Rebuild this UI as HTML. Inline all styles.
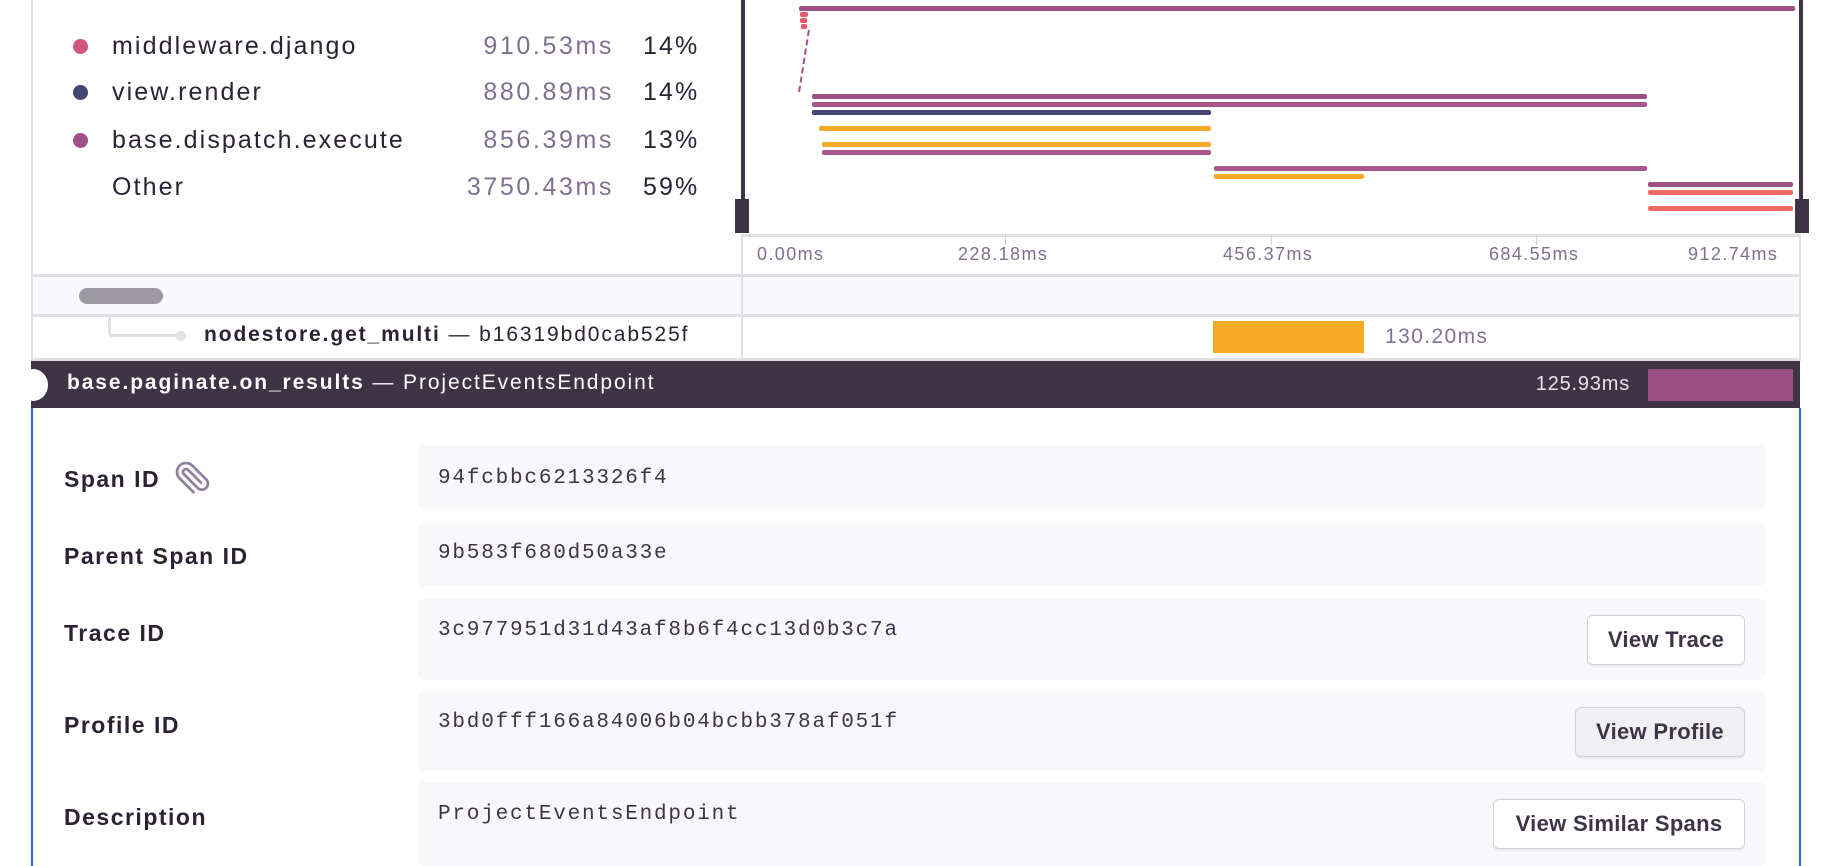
<!DOCTYPE html>
<html><head><meta charset="utf-8"><style>
*{margin:0;padding:0;box-sizing:border-box}
body{width:1838px;height:866px;overflow:hidden;background:#fff;font-family:"Liberation Sans",sans-serif;color:#2b2233;position:relative}
.a{position:absolute;white-space:nowrap}
.dot{position:absolute;width:15px;height:15px;border-radius:50%}
.lg{font-size:25px;color:#2b2233;letter-spacing:2.1px}
.ms{font-size:25px;color:#80708f;text-align:right;width:260px;letter-spacing:2.6px}
.bar{position:absolute;height:5px;border-radius:2px}
.ax{font-size:18px;color:#80708f;letter-spacing:1.4px}
.box{position:absolute;left:418px;width:1347px;background:#f8f8fa;border-radius:6px}
.lbl{position:absolute;left:64px;font-size:23px;font-weight:bold;color:#2b2233;letter-spacing:1.5px}
.val{position:absolute;left:438px;font-family:"Liberation Mono",monospace;font-size:21px;color:#3e3446;letter-spacing:1.8px}
.btn{position:absolute;border:1px solid #d4d0da;border-radius:6px;background:#fff;font-size:22px;font-weight:bold;color:#3e3446;text-align:center;box-shadow:0 2px 0 rgba(0,0,0,.05);letter-spacing:0.3px}
</style></head><body>
<div class="a" style="left:31px;top:0;width:2px;height:361px;background:#e2dee6"></div>
<div class="dot" style="left:73px;top:39px;background:#d2577b"></div>
<div class="dot" style="left:73px;top:85px;background:#444674"></div>
<div class="dot" style="left:73px;top:133px;background:#a1508a"></div>
<div class="a lg" style="left:112px;top:32px">middleware.django</div>
<div class="a lg" style="left:112px;top:78px">view.render</div>
<div class="a lg" style="left:112px;top:126px">base.dispatch.execute</div>
<div class="a lg" style="left:112px;top:173px">Other</div>
<div class="a ms" style="left:354px;top:32px">910.53ms</div>
<div class="a ms" style="left:354px;top:78px">880.89ms</div>
<div class="a ms" style="left:354px;top:126px">856.39ms</div>
<div class="a ms" style="left:354px;top:173px">3750.43ms</div>
<div class="a lg" style="left:643px;top:32px">14%</div>
<div class="a lg" style="left:643px;top:78px">14%</div>
<div class="a lg" style="left:643px;top:126px">13%</div>
<div class="a lg" style="left:643px;top:173px">59%</div>

<!-- chart -->
<div class="a" style="left:741px;top:0;width:4px;height:200px;background:#3e3446"></div>
<div class="a" style="left:1799px;top:0;width:4px;height:200px;background:#3e3446"></div>
<div class="a" style="left:735px;top:199px;width:14px;height:34px;background:#3e3446"></div>
<div class="a" style="left:1795px;top:199px;width:14px;height:34px;background:#3e3446"></div>
<div class="bar" style="left:799px;top:6px;width:996px;background:#9b5086"></div>
<div class="bar" style="left:800px;top:12px;width:8px;background:#e5576b"></div>
<div class="bar" style="left:800px;top:18px;width:7px;background:#e5576b"></div>
<div class="bar" style="left:801px;top:24px;width:6px;background:#e5576b"></div>
<div class="a" style="left:803px;top:30px;width:0;height:62px;border-left:2px dashed #a1508a;transform:skewX(-9deg)"></div>
<div class="bar" style="left:812px;top:94px;width:835px;background:#9b5086"></div>
<div class="bar" style="left:812px;top:102px;width:835px;background:#a8568a"></div>
<div class="bar" style="left:812px;top:110px;width:399px;background:#444674"></div>
<div class="bar" style="left:819px;top:126px;width:392px;background:#f4aa27"></div>
<div class="bar" style="left:822px;top:142px;width:389px;background:#f4aa27"></div>
<div class="bar" style="left:822px;top:150px;width:389px;background:#a8568a"></div>
<div class="bar" style="left:1214px;top:166px;width:433px;background:#a8568a"></div>
<div class="bar" style="left:1214px;top:174px;width:150px;background:#f4aa27"></div>
<div class="bar" style="left:1648px;top:182px;width:145px;background:#9b5086"></div>
<div class="bar" style="left:1648px;top:190px;width:145px;background:#ee6b61"></div>
<div class="bar" style="left:1648px;top:206px;width:145px;background:#ee6b61"></div>

<!-- axis -->
<div class="a" style="left:741px;top:234px;width:1059px;height:3px;background:#e2dee6"></div>
<div class="a" style="left:741px;top:234px;width:2px;height:126px;background:#e2dee6"></div>
<div class="a" style="left:1799px;top:234px;width:2px;height:126px;background:#e2dee6"></div>
<div class="a" style="left:1005px;top:236px;width:1px;height:9px;background:#d4d0da"></div>
<div class="a" style="left:1271px;top:236px;width:1px;height:9px;background:#d4d0da"></div>
<div class="a" style="left:1536px;top:236px;width:1px;height:9px;background:#d4d0da"></div>
<div class="a ax" style="left:757px;top:244px">0.00ms</div>
<div class="a ax" style="left:958px;top:244px">228.18ms</div>
<div class="a ax" style="left:1223px;top:244px">456.37ms</div>
<div class="a ax" style="left:1489px;top:244px">684.55ms</div>
<div class="a ax" style="left:1688px;top:244px">912.74ms</div>

<!-- grey row -->
<div class="a" style="left:31px;top:274px;width:1770px;height:3px;background:#e2dee6"></div>
<div class="a" style="left:33px;top:277px;width:708px;height:37px;background:#f9f9fb"></div>
<div class="a" style="left:743px;top:277px;width:1056px;height:37px;background:#f9f9fb"></div>
<div class="a" style="left:79px;top:288px;width:84px;height:16px;border-radius:8px;background:#9e9aa4"></div>
<div class="a" style="left:31px;top:314px;width:1770px;height:3px;background:#e2dee6"></div>
<!-- nodestore row -->
<div class="a" style="left:108px;top:317px;width:72px;height:20px;border-left:3px solid #e2dee6;border-bottom:3px solid #e2dee6;border-bottom-left-radius:4px"></div>
<div class="a" style="left:176px;top:331px;width:10px;height:10px;border-radius:50%;background:#e2dee6"></div>
<div class="a" style="left:204px;top:323px;font-size:21px;color:#2b2233;letter-spacing:1.9px"><b>nodestore.get_multi</b> — b16319bd0cab525f</div>
<div class="a" style="left:1213px;top:321px;width:151px;height:32px;background:#f4aa27"></div>
<div class="a" style="left:1385px;top:325px;font-size:21px;color:#80708f;letter-spacing:1.4px">130.20ms</div>
<div class="a" style="left:31px;top:358px;width:1770px;height:3px;background:#e2dee6"></div>

<!-- dark header -->
<div class="a" style="left:31px;top:361px;width:1769px;height:47px;background:#3e3446"></div>
<div class="a" style="left:18px;top:369px;width:30px;height:32px;border-radius:50%;background:#fff"></div>
<div class="a" style="left:67px;top:371px;font-size:21px;color:#fff;letter-spacing:1.9px"><b>base.paginate.on_results</b> — ProjectEventsEndpoint</div>
<div class="a" style="left:1480px;top:373px;width:150px;text-align:right;font-size:20px;color:#e6e2ea;letter-spacing:0.8px">125.93ms</div>
<div class="a" style="left:1648px;top:369px;width:145px;height:32px;background:#9b5086"></div>

<!-- details -->
<div class="a" style="left:31px;top:408px;width:2px;height:458px;background:#2f6fe0"></div>
<div class="a" style="left:1799px;top:408px;width:2px;height:458px;background:#2f6fe0"></div>
<div class="box" style="top:445px;height:65px"></div>
<div class="box" style="top:522px;height:64px"></div>
<div class="box" style="top:599px;height:81px"></div>
<div class="box" style="top:690px;height:81px"></div>
<div class="box" style="top:782px;height:84px"></div>
<div class="lbl" style="top:466px">Span ID</div>
<svg class="a" style="left:174px;top:460px" width="36" height="36" viewBox="0 0 24 24" fill="none" stroke="#8f7fa0" stroke-width="1.8" stroke-linecap="round" stroke-linejoin="round"><g transform="rotate(90 12 12)"><path d="M21.44 11.05l-9.19 9.19a6 6 0 0 1-8.49-8.49l9.19-9.19a4 4 0 0 1 5.66 5.66l-9.2 9.19a2 2 0 0 1-2.83-2.83l8.49-8.48"/></g></svg>
<div class="lbl" style="top:543px">Parent Span ID</div>
<div class="lbl" style="top:620px">Trace ID</div>
<div class="lbl" style="top:712px">Profile ID</div>
<div class="lbl" style="top:804px">Description</div>
<div class="val" style="top:467px">94fcbbc6213326f4</div>
<div class="val" style="top:542px">9b583f680d50a33e</div>
<div class="val" style="top:619px">3c977951d31d43af8b6f4cc13d0b3c7a</div>
<div class="val" style="top:711px">3bd0fff166a84006b04bcbb378af051f</div>
<div class="val" style="top:803px">ProjectEventsEndpoint</div>
<div class="btn" style="left:1587px;top:615px;width:158px;height:50px;line-height:48px">View Trace</div>
<div class="btn" style="left:1575px;top:707px;width:170px;height:50px;line-height:48px;background:#f0eff2">View Profile</div>
<div class="btn" style="left:1493px;top:799px;width:252px;height:50px;line-height:48px">View Similar Spans</div>
</body></html>
